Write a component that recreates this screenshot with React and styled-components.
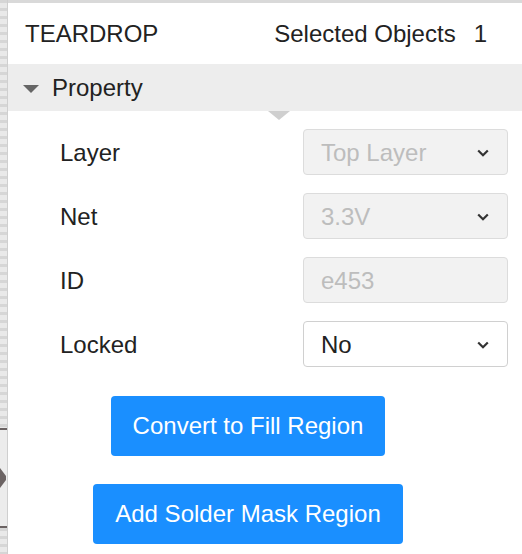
import { Fragment } from "react";
import styled, { createGlobalStyle } from "styled-components";

const GlobalStyle = createGlobalStyle`
	html, body {
		margin: 0;
		padding: 0;
		background: #ffffff;
	}
	body {
		font-family: "Liberation Sans", Arial, sans-serif;
		color: #222222;
	}
`;

const Frame = styled.div`
	display: flex;
	width: 522px;
	height: 554px;
	overflow: hidden;
`;

const Gutter = styled.div`
	width: 7px;
	flex-shrink: 0;
	display: flex;
	flex-direction: column;
	border-right: 1px solid #cfcfcf;
`;

const Dots = styled.div`
	flex: ${(p) => (p.$fill ? 1 : "none")};
	height: ${(p) => (p.$fill ? "auto" : `${p.$h}px`)};
	background: repeating-linear-gradient(to bottom, #d6d6d6 0 3px, #e9e9e9 3px 8px);
`;

const Handle = styled.div`
	height: 96px;
	border-top: 2px solid #6b6363;
	border-bottom: 2px solid #6b6363;
	background: #ececec;
	display: flex;
	align-items: center;
`;

const Panel = styled.div`
	flex: 1;
	display: flex;
	flex-direction: column;
	border-top: 3px solid #d9d9d9;
`;

const Header = styled.div`
	height: 61px;
	display: flex;
	align-items: center;
	justify-content: space-between;
	padding: 0 35px 0 17px;
	font-size: 24px;
`;

const Count = styled.span`
	margin-left: 18px;
`;

const SectionBar = styled.div`
	position: relative;
	height: 47px;
	display: flex;
	align-items: center;
	gap: 13px;
	padding-left: 15px;
	background: #ededed;
	font-size: 24px;

	&::after {
		content: "";
		position: absolute;
		left: 260px;
		top: 100%;
		border-left: 11px solid transparent;
		border-right: 11px solid transparent;
		border-top: 9px solid #cfcfcf;
	}
`;

const Caret = styled.span`
	width: 0;
	height: 0;
	border-left: 8.5px solid transparent;
	border-right: 8.5px solid transparent;
	border-top: 8px solid #666666;
	margin-top: 2px;
`;

const Fields = styled.div`
	display: grid;
	grid-template-columns: 243px 205px;
	grid-auto-rows: 46px;
	row-gap: 18px;
	padding: 18px 0 0 52px;
`;

const Label = styled.div`
	display: flex;
	align-items: center;
	padding-top: 2px;
	font-size: 24px;
	color: #222222;
`;

const Field = styled.div`
	box-sizing: border-box;
	display: flex;
	align-items: center;
	justify-content: space-between;
	padding: 2px 18px 0 17px;
	border: 1px solid ${(p) => (p.$disabled ? "#dcdcdc" : "#d0d0d0")};
	border-radius: 4px;
	background: ${(p) => (p.$disabled ? "#f2f2f2" : "#ffffff")};
	color: ${(p) => (p.$disabled ? "#bdbdbd" : "#222222")};
	font-size: 24px;
`;

const Actions = styled.div`
	display: flex;
	flex-direction: column;
	align-items: center;
	gap: 28px;
	padding: 29px 34px 0 0;
`;

const ActionButton = styled.button`
	height: 60px;
	padding: 0 22px;
	border: none;
	border-radius: 4px;
	background: #1a8fff;
	color: #ffffff;
	font-family: "Liberation Sans", Arial, sans-serif;
	font-size: 24px;
	cursor: pointer;
`;

const Chevron = ({ color }) => (
	<svg width="12" height="8" viewBox="0 0 12 8">
		<path d="M1.2 1.5 L6 6.2 L10.8 1.5" fill="none" stroke={color} strokeWidth="2.2" />
	</svg>
);

const fields = [
	{ label: "Layer", value: "Top Layer", disabled: true, select: true },
	{ label: "Net", value: "3.3V", disabled: true, select: true },
	{ label: "ID", value: "e453", disabled: true, select: false },
	{ label: "Locked", value: "No", disabled: false, select: true },
];

const App = () => {
	return (
		<>
			<GlobalStyle />
			<Frame>
				<Gutter>
					<Dots $fill />
					<Handle>
						<svg width="6" height="20" viewBox="0 0 6 20">
							<polygon points="0,0 6,8 6,12 0,20" fill="#6b6363" />
						</svg>
					</Handle>
					<Dots $h={26} />
				</Gutter>
				<Panel>
					<Header>
						<span>TEARDROP</span>
						<span>
							Selected Objects<Count>1</Count>
						</span>
					</Header>
					<SectionBar>
						<Caret />
						Property
					</SectionBar>
					<Fields>
						{fields.map((f) => (
							<Fragment key={f.label}>
								<Label>{f.label}</Label>
								<Field $disabled={f.disabled}>
									<span>{f.value}</span>
									{f.select && <Chevron color="#333333" />}
								</Field>
							</Fragment>
						))}
					</Fields>
					<Actions>
						<ActionButton>Convert to Fill Region</ActionButton>
						<ActionButton>Add Solder Mask Region</ActionButton>
					</Actions>
				</Panel>
			</Frame>
		</>
	);
};

export default App;
